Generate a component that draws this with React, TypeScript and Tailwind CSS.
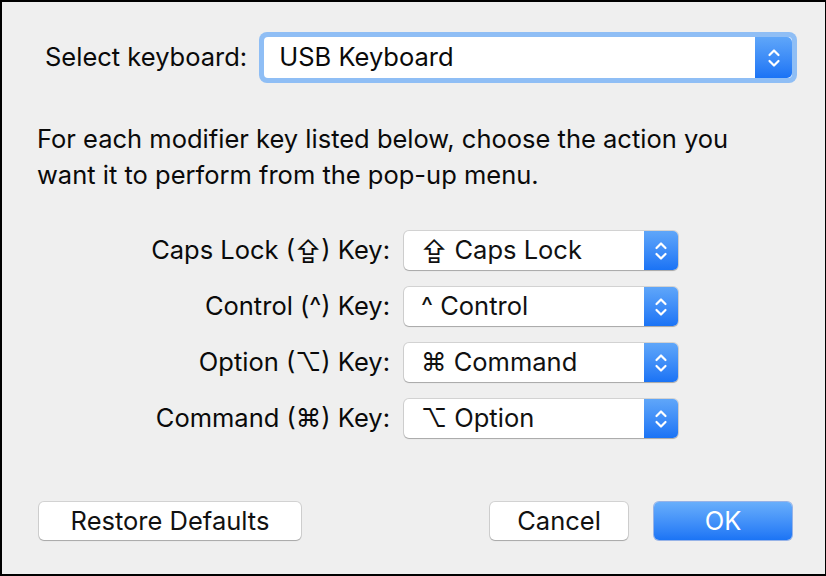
import React from "react";

const font = { fontFamily: "Inter, 'Liberation Sans', sans-serif" };

function Stepper({ big }: { big?: boolean }) {
  return (
    <div
      className={`flex items-center justify-center bg-gradient-to-b from-[#5fa6f9] to-[#1a73f5] ${
        big ? "w-[37px]" : "w-[34px]"
      } self-stretch rounded-r-[5px]`}
    >
      <svg width="16" height="28" viewBox="0 0 16 28" fill="none" stroke="white" strokeWidth="2.2" strokeLinecap="round" strokeLinejoin="round">
        <path d="M3.5 11 L8 6.5 L12.5 11" />
        <path d="M3.5 17 L8 21.5 L12.5 17" />
      </svg>
    </div>
  );
}

function Popup({ value }: { value: string }) {
  return (
    <div className="flex h-[39px] w-[274px] rounded-[5px] bg-white shadow-[0_0_0_1px_rgba(0,0,0,0.12),0_1px_1px_rgba(0,0,0,0.2)]">
      <div className="flex flex-1 items-center pl-[17px] text-[25.5px] text-[#111]">{value}</div>
      <Stepper />
    </div>
  );
}

function Btn({ children, primary, w }: { children: React.ReactNode; primary?: boolean; w: string }) {
  return (
    <button
      className={`${w} h-[38px] rounded-[5px] text-[25.5px] ${
        primary
          ? "bg-gradient-to-b from-[#68aefb] to-[#1b74f5] text-white shadow-[0_0_0_1px_rgba(20,90,220,0.4)]"
          : "bg-white text-[#111] shadow-[0_0_0_1px_rgba(0,0,0,0.12),0_1px_1px_rgba(0,0,0,0.2)]"
      }`}
    >
      {children}
    </button>
  );
}

const rows = [
  { label: "Caps Lock (⇪) Key:", value: "⇪ Caps Lock" },
  { label: "Control (^) Key:", value: "^ Control" },
  { label: "Option (⌥) Key:", value: "⌘ Command" },
  { label: "Command (⌘) Key:", value: "⌥ Option" },
];

export default function App() {
  return (
    <div
      style={font}
      className="flex h-[576px] w-[826px] flex-col border-t-2 border-b-2 border-l-2 border-r border-black bg-[#efefef] text-[#0a0a0a]"
    >
      <div className="flex items-center pl-[43px] pt-[30px]">
        <span className="mr-[12px] text-[25.5px]">Select keyboard:</span>
        <div className="rounded-[8px] bg-[#8fbef5] p-[5px]">
          <div className="flex h-[41px] w-[528px] rounded-[4px] bg-white">
            <div className="flex flex-1 items-center pl-[15px] text-[25.5px]">USB Keyboard</div>
            <Stepper big />
          </div>
        </div>
      </div>

      <p className="mt-[38px] pl-[35px] text-[25.5px] leading-[36px]">
        For each modifier key listed below, choose the action you
        <br />
        want it to perform from the pop-up menu.
      </p>

      <div className="mt-[38px] flex flex-col gap-[17px]">
        {rows.map((r) => (
          <div key={r.label} className="flex items-center">
            <span className="w-[388px] text-right text-[25.5px]">{r.label}</span>
            <div className="ml-[14px]">
              <Popup value={r.value} />
            </div>
          </div>
        ))}
      </div>

      <div className="mt-auto mb-[34px] flex items-center pl-[37px] pr-[33px]">
        <Btn w="w-[262px]">Restore Defaults</Btn>
        <div className="flex-1" />
        <Btn w="w-[138px]">Cancel</Btn>
        <div className="w-[26px]" />
        <Btn primary w="w-[138px]">OK</Btn>
      </div>
    </div>
  );
}
